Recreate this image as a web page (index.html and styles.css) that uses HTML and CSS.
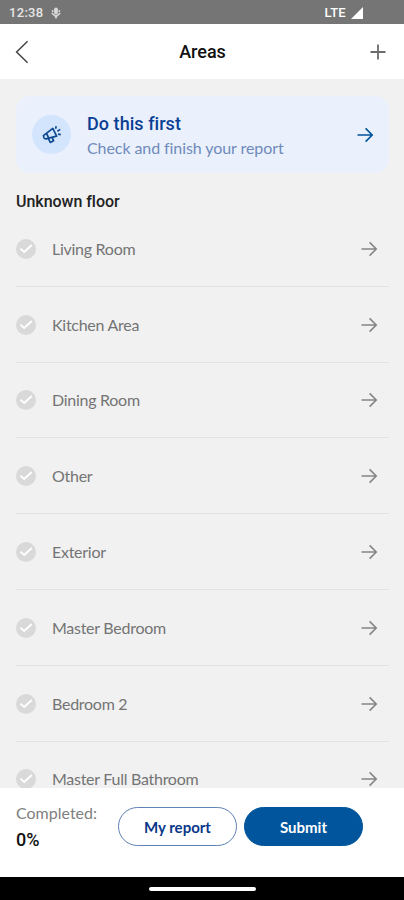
FILE: index.html
```html
<!DOCTYPE html>
<html lang="en">
<head>
	<title>Areas</title>
	<meta charset="UTF-8">
	<meta name="viewport" content="width=device-width, initial-scale=1">
	<link rel="stylesheet" href="styles.css">
</head>
<body>
	<svg class="sprite">
		<symbol id="arrow" viewBox="0 0 18 18">
			<path d="M1.5 9H16M9.6 2.4L16.2 9L9.6 15.6" fill="none" stroke="currentColor" stroke-width="1.6"/>
		</symbol>
		<symbol id="check" viewBox="0 0 20 20">
			<circle cx="10" cy="10" r="10" fill="#d9d9d9"/>
			<path d="M4.4 9.6L8.2 13L15.8 6" fill="none" stroke="#fff" stroke-width="1.9"/>
		</symbol>
	</svg>
	<div class="screen">
		<div class="status">
			<span class="clock">12:38</span>
			<svg class="mic" viewBox="0 0 10 12">
				<rect x="3.2" y="0.5" width="3.6" height="7" rx="1.8"/>
				<path d="M1 4.6L2.4 3.4M9 4.6L7.6 3.4M0.8 6L5 9.6L9.2 6M5 9V11.5" fill="none" stroke="#dcdcdc" stroke-width="1.6"/>
			</svg>
			<span class="network">LTE</span>
			<svg class="signal" viewBox="0 0 12 12"><path d="M12 0V12H0Z"/></svg>
		</div>
		<header class="topbar">
			<svg class="back" viewBox="0 0 14 24"><path d="M12.6 1.2L1.6 12L12.6 22.8"/></svg>
			<h1 class="title">Areas</h1>
			<svg class="plus" viewBox="0 0 16 16"><path d="M8 0.5V15.5M0.5 8H15.5"/></svg>
		</header>
		<main class="content">
			<div class="banner">
				<div class="banner-icon">
					<svg class="megaphone" viewBox="0 0 20 20">
						<path d="M1.4 10.6L10.8 3.4L14.6 11.2L4 13.8Q2.6 13.9 2 12.8Z"/>
						<path d="M4.6 8.6L6.8 13.2"/>
						<path d="M6.2 13.4L8.3 17.4L11.6 15.8L10.2 12.6"/>
						<path d="M13.6 3.8L14.2 1.2M15.4 6.2L18.2 4.4M16 9.1L18.8 9.6"/>
					</svg>
				</div>
				<div class="banner-text">
					<div class="banner-title">Do this first</div>
					<div class="banner-sub">Check and finish your report</div>
				</div>
				<svg class="arrow"><use href="#arrow"/></svg>
			</div>
			<h2 class="floor">Unknown floor</h2>
			<div class="areas">
				<div class="area"><svg class="check"><use href="#check"/></svg><span class="name">Living Room</span><svg class="arrow"><use href="#arrow"/></svg></div>
				<div class="area"><svg class="check"><use href="#check"/></svg><span class="name">Kitchen Area</span><svg class="arrow"><use href="#arrow"/></svg></div>
				<div class="area"><svg class="check"><use href="#check"/></svg><span class="name">Dining Room</span><svg class="arrow"><use href="#arrow"/></svg></div>
				<div class="area"><svg class="check"><use href="#check"/></svg><span class="name">Other</span><svg class="arrow"><use href="#arrow"/></svg></div>
				<div class="area"><svg class="check"><use href="#check"/></svg><span class="name">Exterior</span><svg class="arrow"><use href="#arrow"/></svg></div>
				<div class="area"><svg class="check"><use href="#check"/></svg><span class="name">Master Bedroom</span><svg class="arrow"><use href="#arrow"/></svg></div>
				<div class="area"><svg class="check"><use href="#check"/></svg><span class="name">Bedroom 2</span><svg class="arrow"><use href="#arrow"/></svg></div>
				<div class="area"><svg class="check"><use href="#check"/></svg><span class="name">Master Full Bathroom</span><svg class="arrow"><use href="#arrow"/></svg></div>
			</div>
		</main>
		<footer class="footer">
			<div class="progress">
				<div class="progress-label">Completed:</div>
				<div class="progress-value">0%</div>
			</div>
			<button class="btn">My report</button>
			<button class="btn btn-primary">Submit</button>
		</footer>
		<div class="navbar"><div class="handle"></div></div>
	</div>
</body>
</html>
```

FILE: styles.css
```css
* {
	box-sizing: border-box;
}
body {
	margin: 0;
	font-family: Lato, "Liberation Sans", sans-serif;
	color: #666;
}
svg {
	display: block;
	flex: none;
}
.sprite {
	display: none;
}
.screen {
	display: flex;
	flex-direction: column;
	height: 900px;
	overflow: hidden;
	background: #f1f1f1;
}

/* status bar */
.status {
	display: flex;
	align-items: center;
	flex: none;
	height: 24px;
	padding: 1px 41px 0 9px;
	background: #757575;
	color: #e6e6e6;
	font: 500 13px Roboto, sans-serif;
}
.clock {
	width: 34px;
	letter-spacing: 0.3px;
}
.mic {
	width: 10px;
	height: 12px;
	margin-left: 8px;
	fill: #dcdcdc;
}
.network {
	margin-left: auto;
	color: #fff;
	letter-spacing: 0.3px;
}
.signal {
	width: 12px;
	height: 12px;
	margin-left: 5px;
	fill: #fff;
}

.topbar {
	display: grid;
	grid-template-columns: 40px 1fr 40px;
	align-items: center;
	flex: none;
	height: 55px;
	padding: 0 15px;
	background: #fff;
}
.back {
	width: 14px;
	height: 24px;
	fill: none;
	stroke: #444;
	stroke-width: 1.5;
}
.title {
	margin: 0;
	padding-left: 1px;
	text-align: center;
	font: 500 18px Roboto, sans-serif;
	color: #111;
}
.plus {
	justify-self: end;
	width: 16px;
	height: 16px;
	margin-right: 3px;
	stroke: #6c6c6c;
	stroke-width: 1.8;
}

.content {
	flex: 1;
	min-height: 0;
	overflow: hidden;
	padding: 17px 15px 0 16px;
}
.banner {
	display: flex;
	align-items: center;
	height: 77px;
	padding: 0 15px 0 16px;
	border-radius: 14px;
	background: #eaf1fd;
	color: #00529b;
}
.banner-icon {
	display: flex;
	align-items: center;
	justify-content: center;
	width: 39px;
	height: 39px;
	border-radius: 50%;
	background: #d3e4fd;
}
.megaphone {
	width: 20px;
	height: 20px;
	fill: none;
	stroke: #0d4a8f;
	stroke-width: 1.7;
	stroke-linejoin: round;
}
.banner-text {
	flex: 1;
	padding: 2px 0 0 16px;
}
.banner-title {
	font: 500 18px/24px Roboto, sans-serif;
	letter-spacing: 0.05px;
	color: #0a3f94;
}
.banner-sub {
	font-size: 16px;
	line-height: 24px;
	letter-spacing: -0.08px;
	color: #6f8aba;
}
.arrow {
	width: 18px;
	height: 18px;
}
.floor {
	margin: 0;
	padding-top: 19px;
	height: 38px;
	font: 500 16px/19px Roboto, sans-serif;
	letter-spacing: -0.03px;
	color: #222;
}
.area {
	display: flex;
	align-items: center;
	height: 75.8px;
	padding: 1px 11px 0 0;
	border-bottom: 1px solid #e2e2e2;
	color: #858585;
}
.check {
	width: 20px;
	height: 20px;
}
.name {
	flex: 1;
	padding: 0 0 1px 16px;
	font-size: 16px;
	letter-spacing: -0.27px;
	color: #747474;
}

.footer {
	display: flex;
	align-items: flex-start;
	flex: none;
	height: 89px;
	padding: 14px 41px 0 16px;
	background: #fff;
}
.progress {
	width: 102px;
}
.progress-label {
	font-size: 16px;
	line-height: 22px;
	color: #808080;
}
.progress-value {
	margin-top: 5px;
	font: 500 18px/22px Roboto, sans-serif;
	color: #111;
}
.btn {
	width: 119px;
	height: 39px;
	margin-top: 5px;
	padding: 0;
	border: 1px solid #5f82b5;
	border-radius: 20px;
	background: #fff;
	color: #0a3889;
	font: bold 15px Lato, sans-serif;
}
.btn-primary {
	margin-left: 7px;
	border-color: #00559c;
	background: #00559c;
	color: #fff;
}

.navbar {
	display: flex;
	align-items: center;
	justify-content: center;
	flex: none;
	height: 23px;
	background: #000;
}
.handle {
	width: 107px;
	height: 4px;
	border-radius: 2px;
	background: #fff;
}
```
